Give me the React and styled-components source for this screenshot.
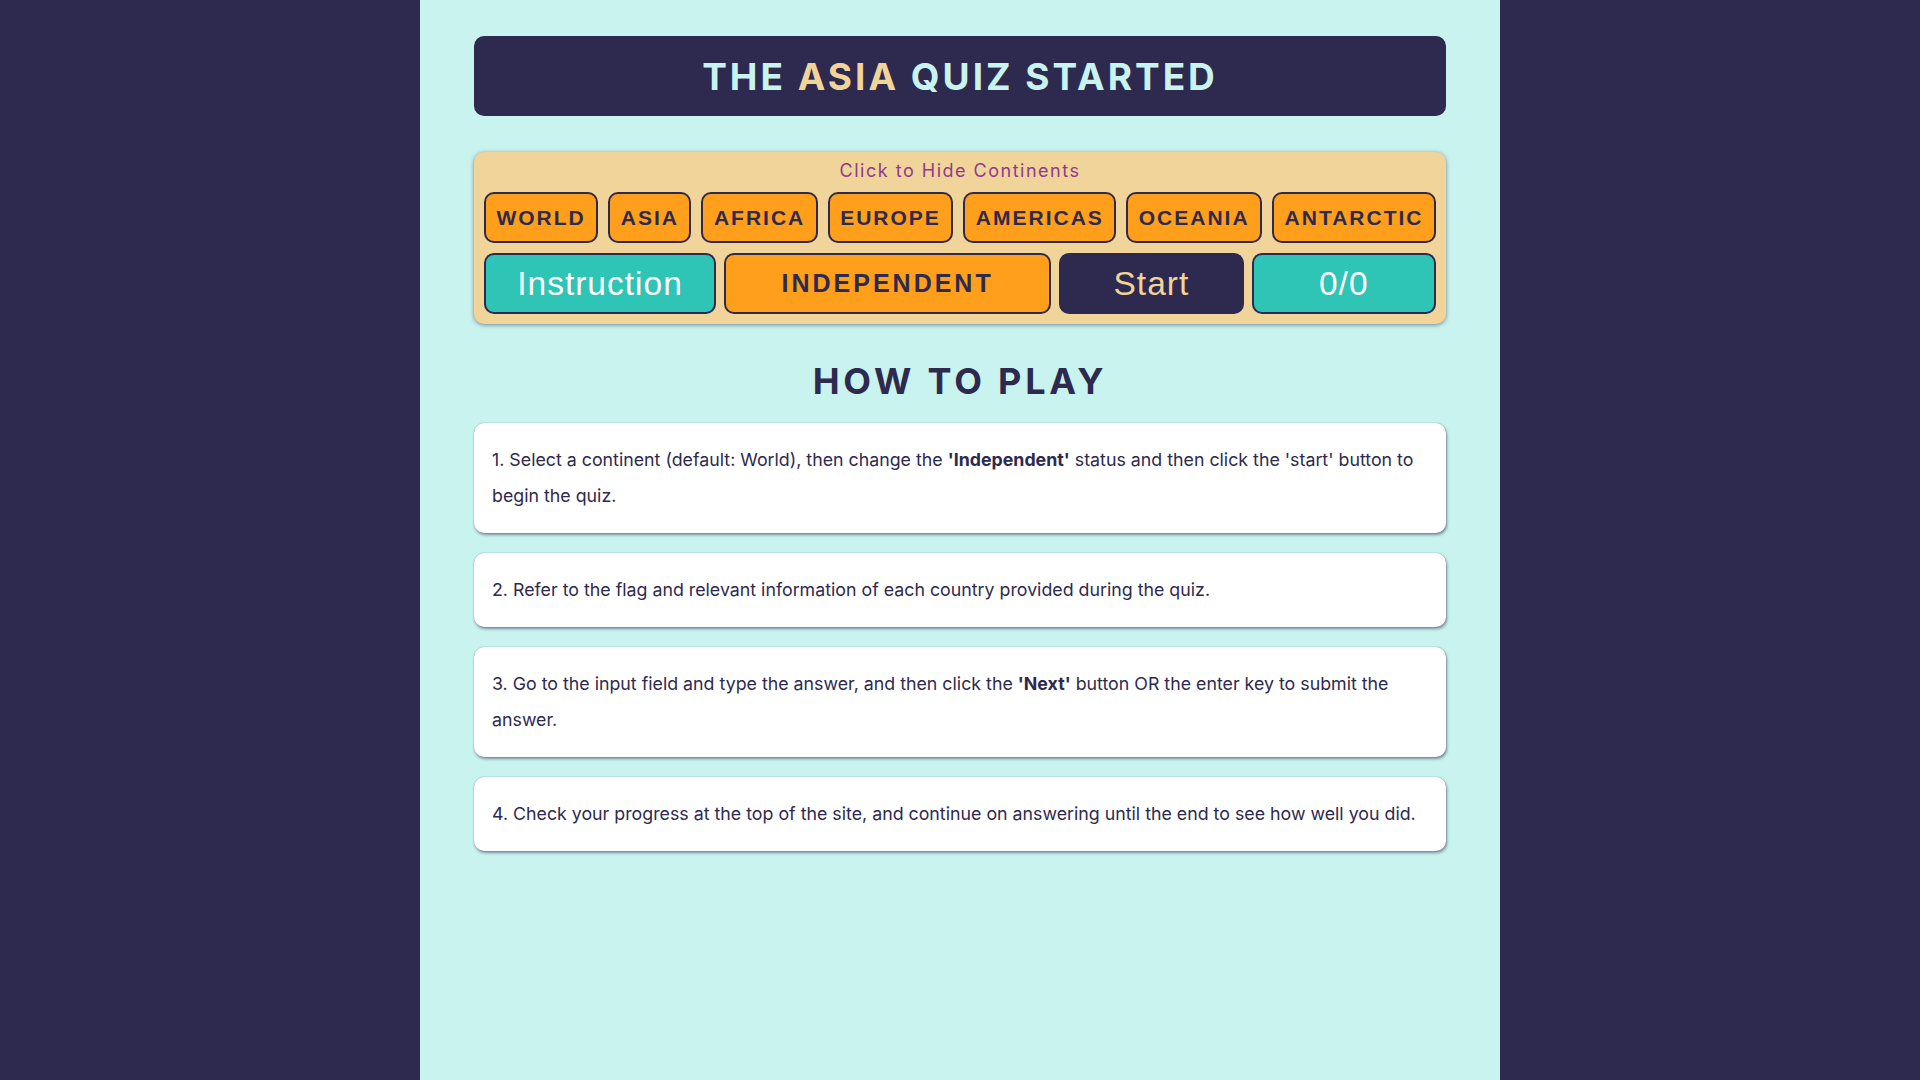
import React from 'react';
import styled, { createGlobalStyle } from 'styled-components';

const colors = {
  navy: '#2e2a4f',
  mint: '#c9f3ee',
  wheat: '#f1d49a',
  orange: '#ff9f1c',
  teal: '#2ec4b6',
  plum: '#8e3b8e',
};

const GlobalStyle = createGlobalStyle`
  html, body {
    margin: 0;
    padding: 0;
    background: ${colors.navy};
    font-family: Inter, "Liberation Sans", sans-serif;
  }
  * {
    box-sizing: border-box;
  }
`;

const Page = styled.div`
  display: flex;
  justify-content: center;
  min-height: 100vh;
`;

const Column = styled.main`
  width: 1080px;
  min-height: 100vh;
  background: ${colors.mint};
  display: flex;
  flex-direction: column;
  align-items: center;
  padding-top: 36px;
`;

const Inner = styled.div`
  width: 90%;
  display: flex;
  flex-direction: column;
`;

const Header = styled.header`
  background: ${colors.navy};
  border-radius: 10px;
  height: 80px;
  display: flex;
  align-items: center;
  justify-content: center;
`;

const Title = styled.h1`
  margin: 0;
  font-family: Inter, sans-serif;
  font-weight: 700;
  font-size: 37px;
  letter-spacing: 3px;
  color: ${colors.mint};
`;

const Highlight = styled.span`
  color: ${colors.wheat};
`;

const Panel = styled.section`
  margin-top: 36px;
  background: ${colors.wheat};
  border-radius: 10px;
  padding: 8px 10px 10px;
  box-shadow: 0 1px 4px rgba(46, 42, 79, 0.55);
  display: flex;
  flex-direction: column;
  gap: 10px;
`;

const Hint = styled.div`
  text-align: center;
  color: ${colors.plum};
  font-size: 18px;
  letter-spacing: 1.5px;
  line-height: 22px;
`;

const Row = styled.div`
  display: flex;
  gap: ${(p) => p.gap || 10}px;
`;

const Chip = styled.button`
  flex: 1 1 auto;
  height: 51px;
  background: ${colors.orange};
  border: 2px solid ${colors.navy};
  border-radius: 10px;
  font-family: "Liberation Sans", Arial, sans-serif;
  font-weight: 700;
  font-size: 21px;
  letter-spacing: 2px;
  color: ${colors.navy};
  padding: 0 8px;
`;

const Action = styled.button`
  flex: 0 0 calc(${(p) => p.share}% - 6px);
  height: 61px;
  border-radius: 10px;
  border: 2px solid ${colors.navy};
  background: ${(p) => p.bg};
  color: ${(p) => p.fg};
  font-family: "Liberation Sans", Arial, sans-serif;
  font-weight: ${(p) => (p.bold ? 700 : 400)};
  font-size: ${(p) => (p.bold ? 25 : 33.5)}px;
  letter-spacing: ${(p) => (p.bold ? 3 : 1)}px;
  padding: 0;
`;

const Heading = styled.h2`
  margin: 35px 0 20px;
  text-align: center;
  font-family: Inter, sans-serif;
  font-weight: 700;
  font-size: 36px;
  letter-spacing: 3.8px;
  line-height: 44px;
  color: ${colors.navy};
`;

const Steps = styled.div`
  display: flex;
  flex-direction: column;
  gap: 20px;
`;

const Card = styled.div`
  background: #fff;
  border-radius: 10px;
  padding: 19px 18px;
  box-shadow: 0 0 1px rgba(46, 42, 79, 0.6), 1px 2px 3px rgba(46, 42, 79, 0.5);
  font-family: Inter, sans-serif;
  font-size: 17.8px;
  line-height: 36px;
  color: ${colors.navy};
`;

const Strong = styled.b`
  font-weight: 700;
`;

const continents = ['WORLD', 'ASIA', 'AFRICA', 'EUROPE', 'AMERICAS', 'OCEANIA', 'ANTARCTIC'];

export default function App() {
  return (
    <Page>
      <GlobalStyle />
      <Column>
        <Inner>
          <Header>
            <Title>
              THE <Highlight>ASIA</Highlight> QUIZ STARTED
            </Title>
          </Header>

          <Panel>
            <Hint>Click to Hide Continents</Hint>
            <Row>
              {continents.map((c) => (
                <Chip key={c}>{c}</Chip>
              ))}
            </Row>
            <Row gap={8}>
              <Action share={25} bg={colors.teal} fg="#fff">Instruction</Action>
              <Action share={35} bg={colors.orange} fg={colors.navy} bold>INDEPENDENT</Action>
              <Action share={20} bg={colors.navy} fg={colors.wheat}>Start</Action>
              <Action share={20} bg={colors.teal} fg="#fff">0/0</Action>
            </Row>
          </Panel>

          <Heading>HOW TO PLAY</Heading>

          <Steps>
            <Card>
              1. Select a continent (default: World), then change the <Strong>'Independent'</Strong> status and then click the 'start' button to begin the quiz.
            </Card>
            <Card>2. Refer to the flag and relevant information of each country provided during the quiz.</Card>
            <Card>
              3. Go to the input field and type the answer, and then click the <Strong>'Next'</Strong> button OR the enter key to submit the answer.
            </Card>
            <Card>4. Check your progress at the top of the site, and continue on answering until the end to see how well you did.</Card>
          </Steps>
        </Inner>
      </Column>
    </Page>
  );
}
